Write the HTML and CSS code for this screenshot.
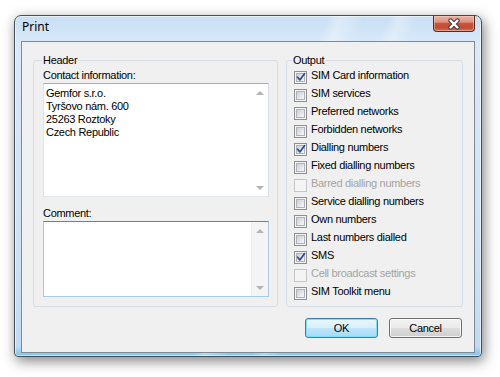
FILE: index.html
```html
<!DOCTYPE html>
<html>
<head>
<meta charset="utf-8">
<title>Print</title>
<link rel="stylesheet" href="styles.css">
</head>
<body>
<div class="window">
  <div class="titlebar">
    <span class="title">Print</span>
    <div class="close">
      <svg width="14" height="12" viewBox="0 0 14 12">
        <path d="M3.5 2.5 L10.5 9.5 M10.5 2.5 L3.5 9.5" stroke="#3d3d3d" stroke-width="4.4" stroke-linecap="round" fill="none"/>
        <path d="M3.5 2.5 L10.5 9.5 M10.5 2.5 L3.5 9.5" stroke="#ffffff" stroke-width="2.4" stroke-linecap="round" fill="none"/>
      </svg>
    </div>
  </div>
  <div class="client">
    <div class="groups">
      <fieldset class="group group-header">
        <legend>Header</legend>
        <div class="field-label">Contact information:</div>
        <div class="textbox contact">
          <div class="textbox-text">Gemfor s.r.o.<br>Tyršovo nám. 600<br>25263 Roztoky<br>Czech Republic</div>
          <div class="scrollbar"><span class="sb-btn"><span class="arrow up"></span></span><span class="sb-btn"><span class="arrow down"></span></span></div>
        </div>
        <div class="field-label comment-label">Comment:</div>
        <div class="textbox comment">
          <div class="textbox-text"></div>
          <div class="scrollbar track"><span class="sb-btn"><span class="arrow up"></span></span><span class="sb-btn"><span class="arrow down"></span></span></div>
        </div>
      </fieldset>
      <fieldset class="group group-output">
        <legend>Output</legend>
        <ul class="checklist">
          <li class="check checked"><span class="cb"></span><span>SIM Card information</span></li>
          <li class="check"><span class="cb"></span><span>SIM services</span></li>
          <li class="check"><span class="cb"></span><span>Preferred networks</span></li>
          <li class="check"><span class="cb"></span><span>Forbidden networks</span></li>
          <li class="check checked"><span class="cb"></span><span>Dialling numbers</span></li>
          <li class="check"><span class="cb"></span><span>Fixed dialling numbers</span></li>
          <li class="check disabled"><span class="cb"></span><span>Barred dialling numbers</span></li>
          <li class="check"><span class="cb"></span><span>Service dialling numbers</span></li>
          <li class="check"><span class="cb"></span><span>Own numbers</span></li>
          <li class="check"><span class="cb"></span><span>Last numbers dialled</span></li>
          <li class="check checked"><span class="cb"></span><span>SMS</span></li>
          <li class="check disabled"><span class="cb"></span><span>Cell broadcast settings</span></li>
          <li class="check"><span class="cb"></span><span>SIM Toolkit menu</span></li>
        </ul>
      </fieldset>
    </div>
    <div class="buttons">
      <button class="btn default">OK</button>
      <button class="btn">Cancel</button>
    </div>
  </div>
</div>
</body>
</html>
```

FILE: styles.css
```css
html, body {
  margin: 0;
  padding: 0;
}
body {
  width: 500px;
  height: 377px;
  overflow: hidden;
  background: #ffffff;
  font-family: "Liberation Sans", Arial, sans-serif;
  font-size: 11px;
  letter-spacing: -0.3px;
  color: #000;
}
.window {
  box-sizing: border-box;
  margin: 15px 0 0 14px;
  width: 468px;
  height: 342px;
  border: 1px solid #44505e;
  border-radius: 7px 7px 4px 4px;
  padding: 0 6px 3px 6px;
  display: flex;
  flex-direction: column;
  background:
    linear-gradient(112deg, rgba(255,255,255,0) 52%, rgba(255,255,255,0.35) 54%, rgba(255,255,255,0) 58%, rgba(255,255,255,0) 62%, rgba(255,255,255,0.3) 64%, rgba(255,255,255,0) 67%),
    linear-gradient(to bottom, #c9dff4 0%, #d8e9f9 8%, #cfe3f6 60%, #c2dbf2 97%, #7cc3ea 100%);
  box-shadow: 2px 4px 13px rgba(0,0,0,0.5), inset 0 0 0 1px rgba(255,255,255,0.55);
}
.titlebar {
  height: 25px;
  flex: none;
  display: flex;
  justify-content: space-between;
  align-items: flex-start;
}
.title {
  font-family: "Noto Sans", "Open Sans", sans-serif;
  font-size: 12px;
  letter-spacing: 0;
  line-height: 16px;
  padding: 3px 0 0 1px;
  color: #000;
}
.close {
  box-sizing: border-box;
  width: 42px;
  height: 17px;
  margin-top: -1px;
  border: 1px solid #5a2a20;
  border-top-color: #6b3a30;
  border-radius: 0 0 4px 4px;
  background: linear-gradient(to bottom, #eab0a2 0%, #de9482 40%, #c8563e 50%, #c24a32 75%, #d8704e 100%);
  box-shadow: inset 0 0 0 1px rgba(255,220,210,0.45);
  display: flex;
  align-items: center;
  justify-content: center;
}
.close svg {
  display: block;
}
.client {
  box-sizing: border-box;
  height: 312px;
  border: 1px solid #7d8b99;
  background: #f0f0f0;
  padding: 12px 11px 0 11px;
  display: flex;
  flex-direction: column;
}
.groups {
  display: grid;
  grid-template-columns: 245px 177px;
  column-gap: 8px;
  height: 253px;
}
.group {
  margin: 0;
  min-width: 0;
  border: 1px solid #d5dfe5;
  border-radius: 3px;
}
.group legend {
  line-height: 13px;
  padding: 0 1px;
}
.group-header {
  padding: 2px 8px 0 9px;
}
.group-header legend {
  margin-left: -1px;
}
.group-output {
  padding: 2px 7px 0 7px;
}
.group-output legend {
  margin-left: -2px;
}
.field-label {
  line-height: 13px;
  margin-bottom: 1px;
}
.comment-label {
  margin-top: 10px;
}
.textbox {
  box-sizing: border-box;
  width: 226px;
  background: #fff;
  border: 1px solid #dbdfe6;
  border-top-color: #abadb3;
  display: flex;
}
.textbox.contact {
  height: 114px;
  border-left-color: #e2e3ea;
  border-right-color: #dbdfe6;
  border-bottom-color: #e3e9ef;
}
.textbox.comment {
  height: 76px;
  border-color: #a9cbe6;
  border-top-color: #4e87b8;
}
.textbox-text {
  flex: 1;
  padding: 3px 2px;
  line-height: 13px;
}
.scrollbar {
  width: 17px;
  flex: none;
  display: flex;
  flex-direction: column;
  justify-content: space-between;
}
.scrollbar.track {
  background: #f4f4f4;
  box-shadow: inset 1px 0 0 #ececec;
}
.sb-btn {
  height: 17px;
  display: flex;
  align-items: center;
  justify-content: center;
}
.arrow {
  width: 0;
  height: 0;
  border-left: 4px solid transparent;
  border-right: 4px solid transparent;
}
.arrow.up {
  border-bottom: 4px solid #b4b4b4;
}
.arrow.down {
  border-top: 4px solid #b4b4b4;
}
.checklist {
  list-style: none;
  margin: 0;
  padding: 0;
}
.check {
  height: 18px;
  line-height: 13px;
  display: flex;
  align-items: flex-start;
  gap: 4px;
}
.cb {
  position: relative;
  box-sizing: border-box;
  width: 13px;
  height: 13px;
  margin-top: 2px;
  flex: none;
  border: 1px solid #8f8f8f;
  background: #f4f4f4;
  padding: 1px;
}
.cb::before {
  content: "";
  display: block;
  box-sizing: border-box;
  width: 9px;
  height: 9px;
  border: 1px solid #aeb3b9;
  background: linear-gradient(135deg, #cbcfd5 0%, #e4e6e9 55%, #f9f9f9 100%);
}
.check.checked .cb::after {
  content: "";
  position: absolute;
  left: 1px;
  top: 0px;
  width: 10px;
  height: 10px;
  background: url("data:image/svg+xml;utf8,<svg xmlns='http://www.w3.org/2000/svg' width='10' height='10' viewBox='0 0 10 10'><path d='M1.6 5.2 L3.9 7.9 L8.6 1.6' stroke='%232a4a9e' stroke-width='1.7' fill='none' stroke-linecap='round' stroke-linejoin='round'/></svg>") no-repeat;
}
.check.disabled {
  color: #a3a3a3;
}
.check.disabled .cb {
  border-color: #c6c6c6;
  background: #f4f4f4;
}
.check.disabled .cb::before {
  border-color: #f4f4f4;
  background: #f4f4f4;
}
.buttons {
  display: flex;
  justify-content: flex-end;
  gap: 11px;
  margin-top: 11px;
  padding-right: 1px;
}
.btn {
  box-sizing: border-box;
  width: 73px;
  height: 20px;
  padding: 0;
  font-family: "Liberation Sans", Arial, sans-serif;
  font-size: 11px;
  letter-spacing: -0.3px;
  color: #000;
  border: 1px solid #707070;
  border-radius: 3px;
  background: linear-gradient(to bottom, #f2f2f2 0%, #ebebeb 50%, #dddddd 50%, #cfcfcf 100%);
  box-shadow: inset 0 0 0 1px rgba(255,255,255,0.75);
}
.btn.default {
  border-color: #3c7fb1;
  background: linear-gradient(to bottom, #eaf6fd 0%, #d9f0fc 50%, #bee6fd 50%, #a7d9f5 100%);
  box-shadow: inset 0 0 0 1px #7fdcf7;
}
```
